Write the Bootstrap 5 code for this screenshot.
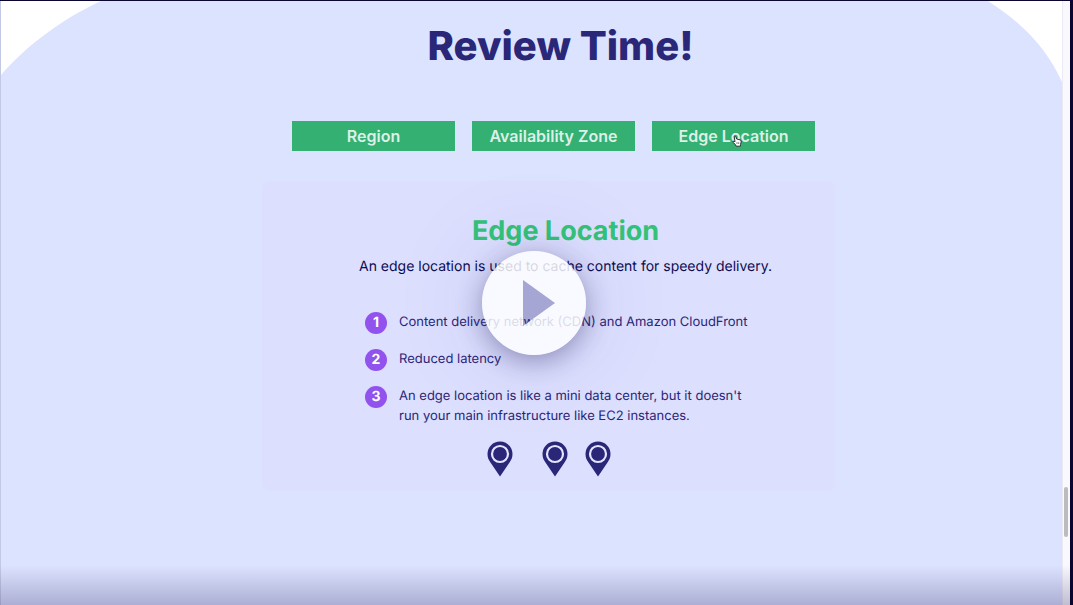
<!DOCTYPE html>
<html lang="en">
<head>
<meta charset="utf-8">
<meta name="viewport" content="width=device-width, initial-scale=1">
<title>Review Time!</title>
<link rel="stylesheet" href="https://cdn.jsdelivr.net/npm/bootstrap@5.3.0/dist/css/bootstrap.min.css">
<style>
  body { font-family: Inter, "Liberation Sans", sans-serif; background: #0b0630; color: #2a2678; text-rendering: geometricPrecision; }
  .player { min-height: 100vh; border-top: 1px solid #0b0630; border-right: 3px solid #0b0630; }
  .slide { background: #dce3ff; border-left: 1px solid #c3c8e4; padding-left: 34px; }
  .corner-left { width: 100px; height: 74px; top: 0; left: 0; }
  .corner-right { width: 74px; height: 81px; top: 0; right: 0; }
  .slide-title { font-size: 40px; line-height: 48px; font-weight: 800; padding: 21px 0 0 24px; margin-bottom: 51px; }
  .topic-row { display: grid; grid-template-columns: repeat(3, 1fr); gap: 17px; width: 100%; max-width: 523px; margin-left: 10px; }
  .btn-topic { height: 30px; padding: 0; border: 0; border-radius: 0; background: #34b072; color: #dcf0e8; font-size: 16px; line-height: 28px; font-weight: 600; }
  .btn-topic:hover { background: #2fa368; color: #fff; }
  .pointer { width: 10px; height: 12px; top: 14px; left: 80px; }
  .panel { width: 100%; max-width: 573px; margin-top: 30px; padding: 33px 0 14px 34px; background: #dcdffe; border-radius: 8px; }
  .panel-title { font-size: 27px; line-height: 34px; font-weight: 700; color: #34c279; margin-bottom: 8px; }
  .panel-text { font-size: 14px; line-height: 22px; color: #0e0b50; margin-bottom: 34px; }
  .points { margin-left: 69px; font-size: 13px; line-height: 20px; }
  .point { gap: 12px; margin-bottom: 15px; }
  .num { width: 22px; height: 22px; background: #9152ee; color: #fff; font-size: 14px; font-weight: 700; line-height: 22px; flex: none; }
  .pins { padding-left: 191px; }
  .pin { width: 26px; height: 36px; }
  .pin-second { margin-left: 29px; }
  .pin-third { margin-left: 17px; }
  .scroll-track { width: 8px; background: #f9f8fc; border-left: 1px solid #eceaf5; flex: none; }
  .scroll-thumb { width: 4px; height: 50px; top: 486px; right: 2px; background: #bcbcbc; }
  .shade { height: 40px; background: linear-gradient(rgba(60,55,110,0), rgba(60,55,110,.3)); pointer-events: none; }
  .play-layer { inset: 0 3px 0 0; }
  .btn-play { width: 104px; height: 104px; line-height: 0; box-shadow: 0 6px 26px rgba(40,36,100,.42), 0 0 100px rgba(60,56,120,.13); }
</style>
</head>
<body>
<div class="player d-flex position-relative">
  <main class="slide flex-grow-1 position-relative d-flex flex-column align-items-center">
    <svg class="corner-left position-absolute" viewBox="0 0 100 74" aria-hidden="true"><path d="M0 0H100C61 18 25 45 0 74Z" fill="#fff"/></svg>
    <svg class="corner-right position-absolute" viewBox="0 0 74 81" aria-hidden="true"><path d="M0 0H74V81C59 48 36 23 0 0Z" fill="#fff"/></svg>

    <h1 class="slide-title text-center">Review Time!</h1>

    <div class="topic-row">
      <button type="button" class="btn btn-topic">Region</button>
      <button type="button" class="btn btn-topic">Availability Zone</button>
      <button type="button" class="btn btn-topic position-relative">Edge Location
        <svg class="pointer position-absolute" viewBox="0 0 10 12" aria-hidden="true"><path d="M2.2 1.2Q3.4.5 3.9 1.8L4.6 4 8 4.8Q9.5 5.2 9.2 7L8.5 9.4 8.4 11.2H4.2L3.4 9.5.8 7.2Q.5 6 2 6.2L3 6.8Z" fill="#fff" stroke="#222" stroke-width=".9"/><path d="M5 7.2V9M6.7 7.2V9" stroke="#222" stroke-width=".6"/></svg>
      </button>
    </div>

    <section class="panel">
      <h2 class="panel-title text-center">Edge Location</h2>
      <p class="panel-text text-center">An edge location is used to cache content for speedy delivery.</p>
      <ol class="points list-unstyled mb-0">
        <li class="point d-flex"><span class="num rounded-circle text-center">1</span><span>Content delivery network (CDN) and Amazon CloudFront</span></li>
        <li class="point d-flex"><span class="num rounded-circle text-center">2</span><span>Reduced latency</span></li>
        <li class="point d-flex"><span class="num rounded-circle text-center">3</span><span>An edge location is like a mini data center, but it doesn't<br>run your main infrastructure like EC2 instances.</span></li>
      </ol>
      <div class="pins d-flex" aria-hidden="true">
        <svg class="pin" viewBox="0 0 26 36"><use href="#pin-shape"/></svg>
        <svg class="pin pin-second" viewBox="0 0 26 36"><use href="#pin-shape"/></svg>
        <svg class="pin pin-third" viewBox="0 0 26 36"><g id="pin-shape"><path d="M13 0.5C6 .5.5 6 .5 13 .5 16.500 1.700 19 3.500 21.500L13 35.500 22.500 21.500C24.300 19 25.500 16.500 25.500 13 25.500 6 20 .5 13 .5Z" fill="#2a2678"/><circle cx="13" cy="13" r="8" fill="none" stroke="#e4e5ff" stroke-width="2.200"/></g></svg>
      </div>
    </section>
  </main>

  <div class="scroll-track position-relative"><div class="scroll-thumb position-absolute rounded-pill"></div></div>

  <div class="play-layer position-absolute d-flex align-items-center justify-content-center">
    <button type="button" class="btn-play btn border-0 p-0 rounded-circle" aria-label="Play">
      <svg width="104" height="104" viewBox="0 0 104 104" aria-hidden="true"><path fill="#fff" fill-opacity=".83" fill-rule="evenodd" d="M52 0A52 52 0 1 1 52 104A52 52 0 1 1 52 0ZM41 29V75L73 52Z"/><path fill="#282470" fill-opacity=".3" d="M41 29V75L73 52Z"/></svg>
    </button>
  </div>
  <div class="shade position-absolute bottom-0 start-0 end-0"></div>
</div>
<script src="https://cdn.jsdelivr.net/npm/bootstrap@5.3.0/dist/js/bootstrap.bundle.min.js"></script>
</body>
</html>
